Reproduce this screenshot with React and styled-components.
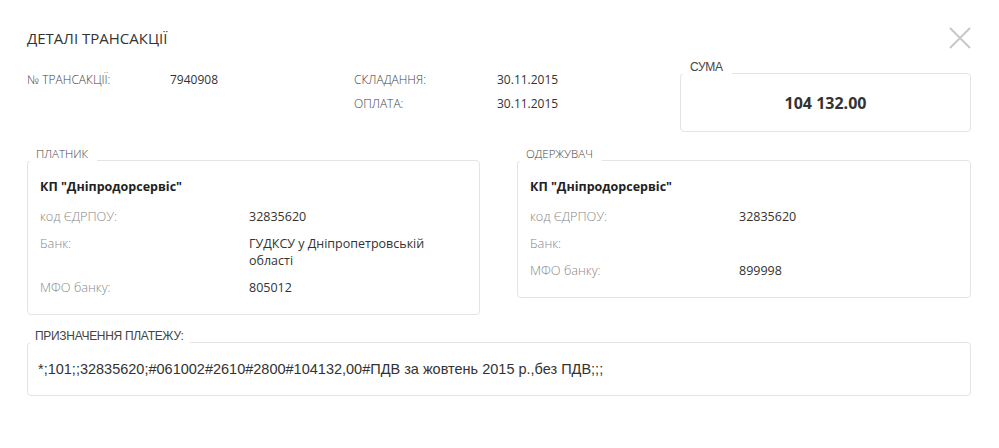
import React from 'react';
import styled, { createGlobalStyle } from 'styled-components';

const GlobalStyle = createGlobalStyle`
  html, body {
    margin: 0;
    padding: 0;
    background: #ffffff;
  }
  body {
    font-family: 'Open Sans', 'Liberation Sans', Arial, sans-serif;
    color: #333333;
  }
  * {
    box-sizing: border-box;
  }
`;

const Page = styled.div`
  width: 999px;
  padding: 26px 28px 40px 27px;
`;

const Header = styled.div`
  display: flex;
  align-items: center;
  justify-content: space-between;
  height: 24px;
`;

const Title = styled.h1`
  margin: 0;
  font-size: 15px;
  font-weight: 400;
  line-height: 20px;
  color: #333333;
`;

const CloseButton = styled.button`
  display: flex;
  padding: 0;
  margin: 0 -1px 0 0;
  border: none;
  background: none;
  cursor: pointer;
`;

const TopSection = styled.div`
  display: flex;
  align-items: flex-start;
  margin-top: 18px;
`;

const InfoGrid = styled.div`
  display: grid;
  grid-template-columns: 143px 184px 143px 1fr;
  grid-auto-rows: 24px;
  width: 653px;
  font-size: 12px;
  line-height: 24px;
`;

const InfoLabel = styled.div`
  grid-column: ${p => p.col};
  font-weight: 300;
  color: #444444;
`;

const InfoValue = styled.div`
  grid-column: ${p => p.col};
  color: #333333;
`;

const Panel = styled.div`
  position: relative;
  border: 1px solid #e2e5e7;
  border-radius: 4px;
  background: #ffffff;
`;

const PanelLabel = styled.div`
  position: absolute;
  left: -1px;
  bottom: 100%;
  padding: 0 ${p => p.padRight || 9}px 0 ${p => p.padLeft || 9}px;
  background: #ffffff;
  font-family: ${p => (p.arial ? "'Liberation Sans', Arial, sans-serif" : "'Open Sans', sans-serif")};
  font-size: ${p => (p.arial ? '12px' : '11.5px')};
  font-weight: ${p => (p.arial ? 400 : 300)};
  letter-spacing: ${p => (p.arial ? '-0.3px' : '0')};
  line-height: 14px;
  color: #444444;
  white-space: nowrap;
`;

const SumPanel = styled(Panel)`
  width: 291px;
  height: 59px;
  margin-top: 5px;
  display: flex;
  align-items: center;
  justify-content: center;
`;

const SumValue = styled.div`
  font-size: 16px;
  font-weight: 700;
  color: #333333;
  line-height: 20px;
`;

const Parties = styled.div`
  display: flex;
  align-items: flex-start;
  justify-content: space-between;
  margin-top: 28px;
`;

const PartyPanel = styled(Panel)`
  width: ${p => p.w}px;
  padding: 17px 12px 18px 12px;
`;

const PartyGrid = styled.div`
  display: grid;
  grid-template-columns: 209px 1fr;
  row-gap: 10px;
  font-size: 12.5px;
  line-height: 17px;
`;

const PartyName = styled.div`
  grid-column: 1 / -1;
  font-size: 12.5px;
  font-weight: 700;
  line-height: 18px;
  margin-bottom: 2px;
  color: #222222;
`;

const FieldLabel = styled.div`
  font-size: 12.8px;
  font-weight: 300;
  color: #888888;
`;

const FieldValue = styled.div`
  color: #333333;
  padding-right: 8px;
`;

const PurposePanel = styled(Panel)`
  margin-top: 27px;
  padding: 18px 10px 18px 10px;
`;

const PurposeText = styled.div`
  font-family: 'Liberation Sans', Arial, sans-serif;
  font-size: 14.5px;
  line-height: 16px;
  color: #333333;
`;

function CloseIcon() {
  return (
    <svg width="24" height="24" viewBox="0 0 24 24" fill="none">
      <path d="M2 2 L22 22 M22 2 L2 22" stroke="#c6c9cc" strokeWidth="2" />
    </svg>
  );
}

const payer = {
  name: 'КП "Дніпродорсервіс"',
  code: '32835620',
  bank: 'ГУДКСУ у Дніпропетровській області',
  mfo: '805012',
};

const receiver = {
  name: 'КП "Дніпродорсервіс"',
  code: '32835620',
  bank: '',
  mfo: '899998',
};

function Party({ title, data, width }) {
  return (
    <PartyPanel w={width}>
      <PanelLabel>{title}</PanelLabel>
      <PartyGrid>
        <PartyName>{data.name}</PartyName>
        <FieldLabel>код ЄДРПОУ:</FieldLabel>
        <FieldValue>{data.code}</FieldValue>
        <FieldLabel>Банк:</FieldLabel>
        <FieldValue>{data.bank}</FieldValue>
        <FieldLabel>МФО банку:</FieldLabel>
        <FieldValue>{data.mfo}</FieldValue>
      </PartyGrid>
    </PartyPanel>
  );
}

export default function App() {
  return (
    <Page>
      <GlobalStyle />
      <Header>
        <Title>ДЕТАЛІ ТРАНСАКЦІЇ</Title>
        <CloseButton aria-label="close">
          <CloseIcon />
        </CloseButton>
      </Header>

      <TopSection>
        <InfoGrid>
          <InfoLabel col={1}>№ ТРАНСАКЦІЇ:</InfoLabel>
          <InfoValue col={2}>7940908</InfoValue>
          <InfoLabel col={3}>СКЛАДАННЯ:</InfoLabel>
          <InfoValue col={4}>30.11.2015</InfoValue>
          <InfoLabel col={3}>ОПЛАТА:</InfoLabel>
          <InfoValue col={4}>30.11.2015</InfoValue>
        </InfoGrid>
        <SumPanel>
          <PanelLabel arial padLeft={10}>СУМА</PanelLabel>
          <SumValue>104 132.00</SumValue>
        </SumPanel>
      </TopSection>

      <Parties>
        <Party title="ПЛАТНИК" data={payer} width={453} />
        <Party title="ОДЕРЖУВАЧ" data={receiver} width={454} />
      </Parties>

      <PurposePanel>
        <PanelLabel arial padLeft={8} padRight={6}>ПРИЗНАЧЕННЯ ПЛАТЕЖУ:</PanelLabel>
        <PurposeText>
          *;101;;32835620;#061002#2610#2800#104132,00#ПДВ за жовтень 2015 р.,без ПДВ;;;
        </PurposeText>
      </PurposePanel>
    </Page>
  );
}
